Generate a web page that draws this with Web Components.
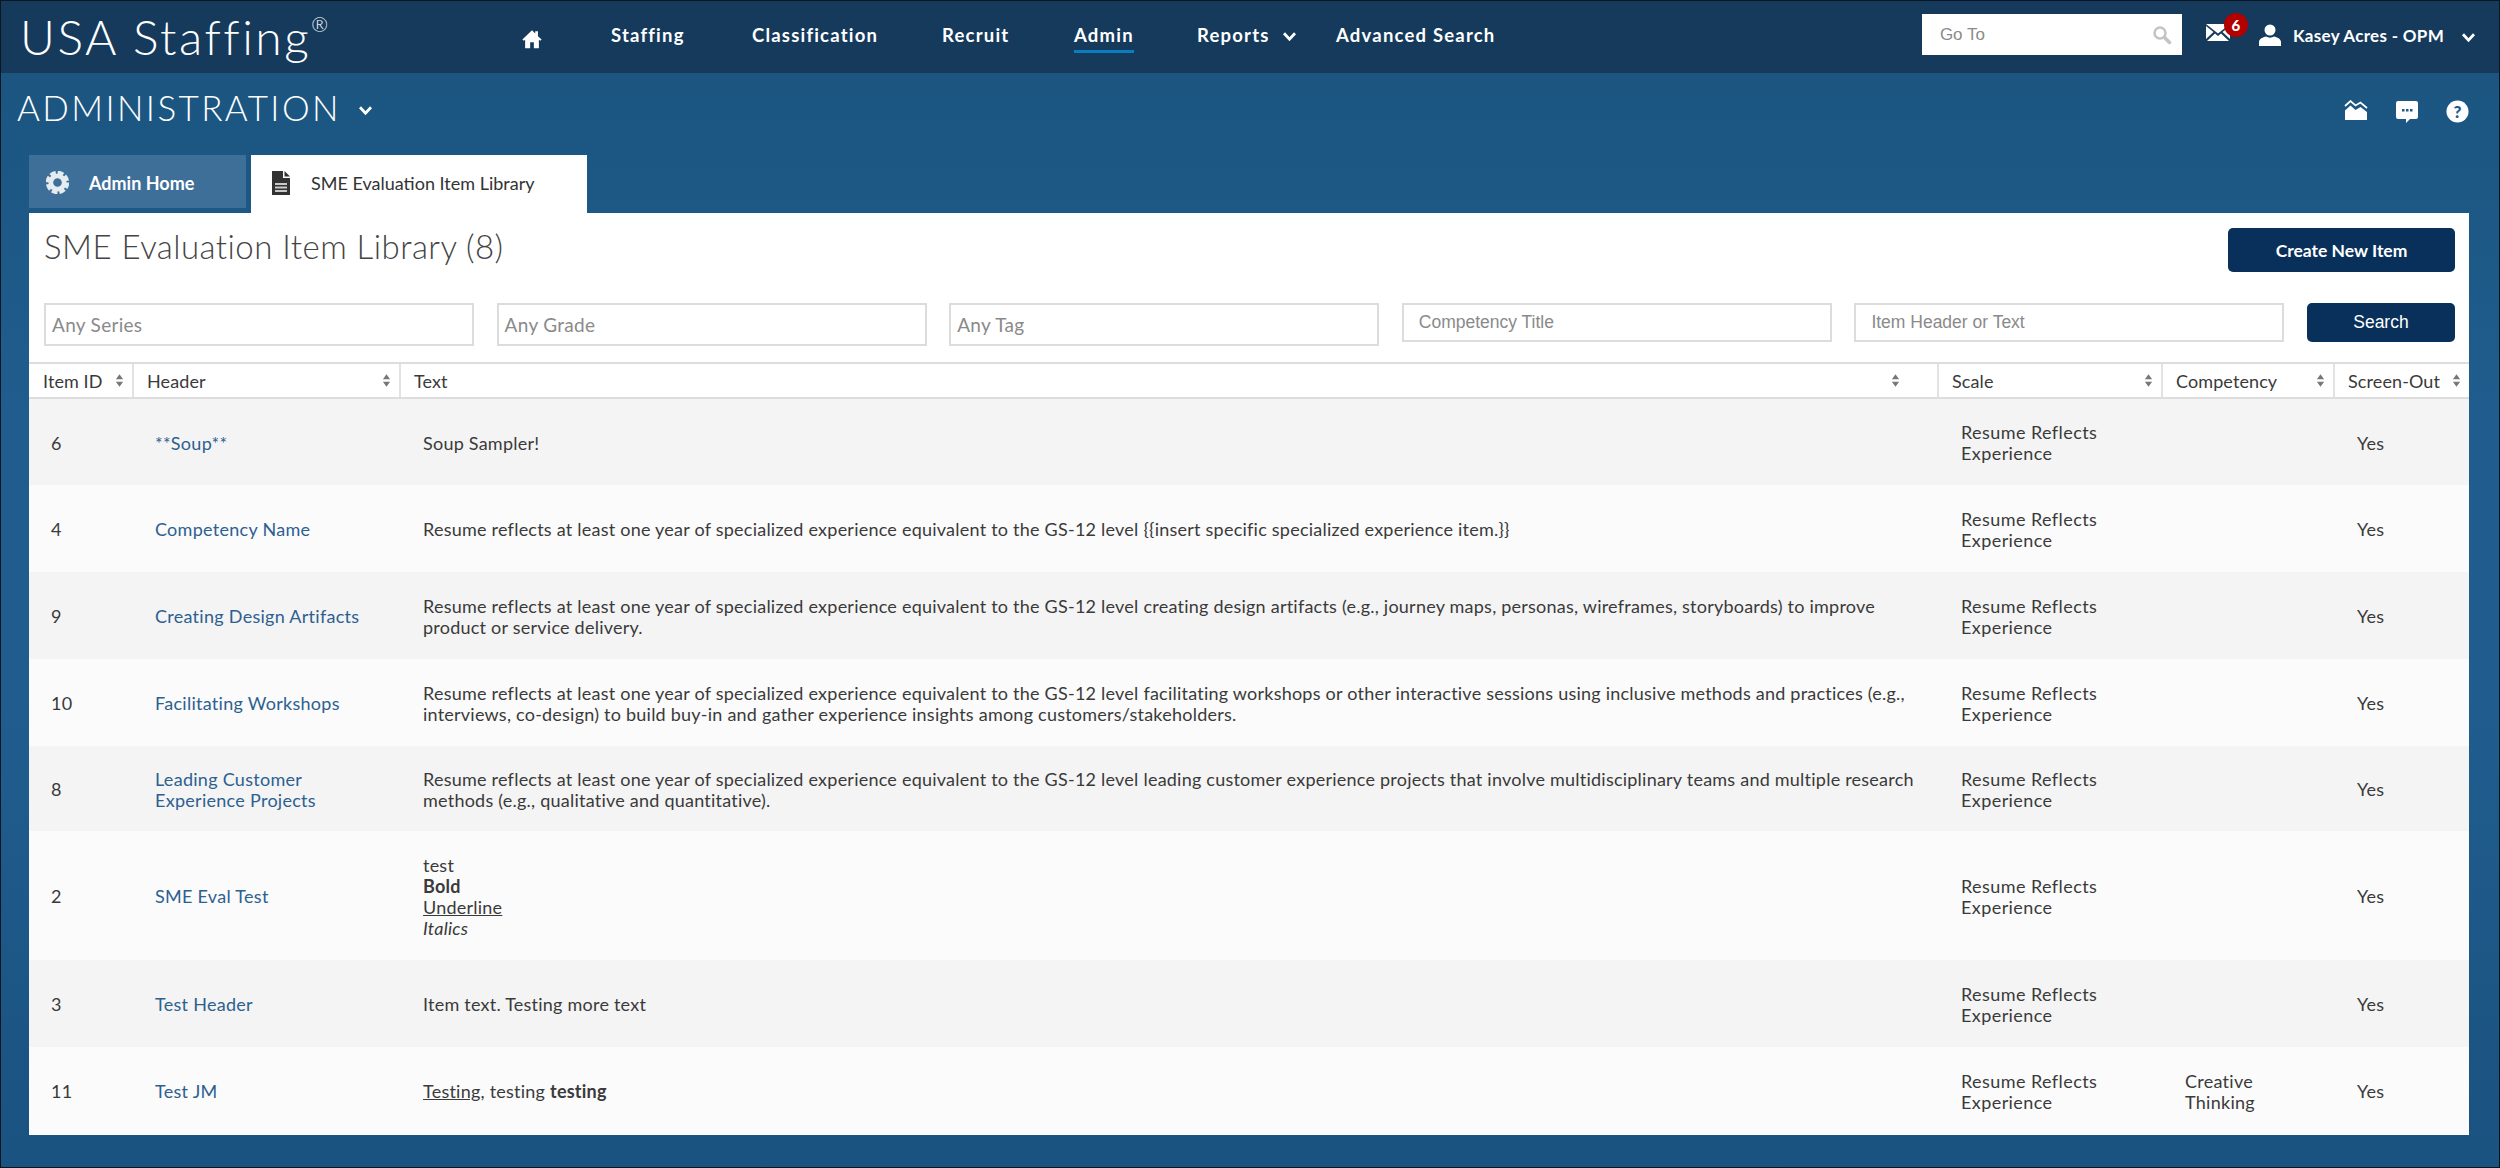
<!DOCTYPE html>
<html>
<head>
<meta charset="utf-8">
<title>SME Evaluation Item Library</title>
<style>
  html, body { margin: 0; height: 100%; }
  body {
    box-sizing: border-box;
    height: 1168px;
    overflow: hidden;
    border: 1px solid #0a1622;
    font-family: Lato, "Open Sans", sans-serif;
    background: linear-gradient(#1b5580 73px, #205d8e 420px, #205d8e 700px, #1a5280 1168px);
  }
</style>
</head>
<body>
<usa-header></usa-header>
<page-band></page-band>
<tab-strip>
  <tab-item icon="gear">Admin Home</tab-item>
  <tab-item icon="doc" active>SME Evaluation Item Library</tab-item>
</tab-strip>
<library-panel></library-panel>

<script>
const icons = {
  home: `<svg viewBox="0 0 24 24" width="22" height="22"><path fill="#fff" d="M12 2.500 1.500 12.500l1.500 1.500L4.500 12.700V22h5.500v-6.500h4V22h5.500V12.700l1.500 1.300 1.500-1.500L18.500 8.900V3.500h-3v2.500z"/></svg>`,
  chevron: `<svg viewBox="0 0 16 12" width="15" height="11"><path fill="none" stroke="#fff" stroke-width="3" d="M2 2.500 8 9l6-6.500"/></svg>`,
  search: `<svg viewBox="0 0 20 20" width="20" height="20"><circle cx="8" cy="8" r="5.500" fill="none" stroke="#c4c4c4" stroke-width="2.500"/><path stroke="#c4c4c4" stroke-width="3.500" stroke-linecap="round" d="m12.500 12.500 5 5"/></svg>`,
  mail: `<svg viewBox="0 0 24 17" width="24" height="17"><path fill="#fff" d="M0 0h24L12 9.500z"/><path fill="#fff" d="M0 2v13l7.500-7zM24 2v13l-7.500-7zM1 17l8-7.500 3 2.500 3-2.500 8 7.500z"/></svg>`,
  user: `<svg viewBox="0 0 22 22" width="22" height="22"><circle cx="11" cy="6" r="5.500" fill="#fff"/><path fill="#fff" d="M0 22v-4c0-3 4-5 7-5.500 2.500 1.500 5.500 1.500 8 0 3 .5 7 2.500 7 5.500v4z"/></svg>`,
  chart: `<svg viewBox="0 0 24 20" width="24" height="20"><path fill="#fff" d="M1 10.500l5.500-5 5 4.500 5-3L23 12v8H1z"/><path fill="none" stroke="#fff" stroke-width="1.700" d="M1 6l5.500-5 5 4.500 5-3L23 8"/></svg>`,
  chat: `<svg viewBox="0 0 24 24" width="24" height="24"><path fill="#fff" d="M3 1h18a2 2 0 0 1 2 2v14a2 2 0 0 1-2 2h-6l-4 4v-4H3a2 2 0 0 1-2-2V3a2 2 0 0 1 2-2z"/><g fill="#1d5a89"><rect x="7" y="9" width="2.500" height="2.500"/><rect x="11" y="9" width="2.500" height="2.500"/><rect x="15" y="9" width="2.500" height="2.500"/></g></svg>`,
  help: `<svg viewBox="0 0 24 24" width="23" height="23"><circle cx="12" cy="12" r="11.500" fill="#fff"/><text x="12" y="18.500" text-anchor="middle" font-family="Lato, sans-serif" font-weight="900" font-size="18" fill="#1d5a89">?</text></svg>`,
  gear: `<svg viewBox="0 0 24 24" width="23" height="23"><circle cx="12" cy="12" r="7" fill="none" stroke="#e4ebf1" stroke-width="5"/><circle cx="12" cy="12" r="10" fill="none" stroke="#e4ebf1" stroke-width="4.500" stroke-dasharray="5.800 2.050"/></svg>`,
  doc: `<svg viewBox="0 0 18 24" width="18" height="24"><path fill="#333" d="M0 0h11v7h7v17H0z"/><path fill="#333" d="M12.500 0 18 5.500h-5.500z"/><path fill="#c9c9c9" d="M3 12h12v2H3zM3 15.500h12v2H3zM3 19h12v2H3z"/></svg>`,
  sort: `<svg viewBox="0 0 10 16" width="9" height="15"><path fill="#777" d="M5 1l4 5.500H1zM5 15l-4-5.500h8z"/></svg>`
};

class UsaHeader extends HTMLElement {
  constructor() {
    super();
    this.attachShadow({ mode: 'open' }).innerHTML = `
      <style>
        :host { display: flex; align-items: flex-start; height: 72px; background: #153a5c; color: #fff; }
        svg { display: block; }
        .logo { width: 512px; padding: 9px 0 0 19px; box-sizing: border-box; font: 300 48px/54px Lato, sans-serif; letter-spacing: 2.500px; white-space: nowrap; }
        .logo sup { font-size: 20px; line-height: 0; vertical-align: 23px; letter-spacing: 0; }
        nav { display: grid; grid-template-columns: 98px 141px 190px 132px 123px 139px auto; align-items: start; height: 72px; }
        nav a { font: 700 18.500px/24px Lato, sans-serif; letter-spacing: 1.200px; padding-top: 22px; white-space: nowrap; display: flex; align-items: flex-start; }
        nav a span { display: block; padding-bottom: 3px; }
        nav a.on span { border-bottom: 3px solid #0a7dbf; }
        .home { padding: 27px 0 0 8px; }
        nav a .chev { margin: 8px 0 0 12px; }
        .right { margin-left: auto; display: flex; align-items: flex-start; padding-right: 23px; }
        .goto { width: 260px; height: 41px; margin-top: 13px; background: #fff; box-sizing: border-box; display: flex; align-items: center; justify-content: space-between; padding: 0 10px 0 18px; color: #8a8a8a; font: 17px "Liberation Sans", sans-serif; }
        .mail { position: relative; margin: 23px 0 0 24px; width: 53px; }
        .badge { position: absolute; left: 18px; top: -11px; width: 24px; height: 24px; border-radius: 50%; background: #b30000; font: 900 15px/24px Lato, sans-serif; text-align: center; }
        .user { margin-top: 23px; }
        .name { margin: 23px 17px 0 12px; font: 700 17px/24px Lato, sans-serif; white-space: nowrap; letter-spacing: .3px; }
        .uchev { margin-top: 31px; }
      </style>
      <div class="logo">USA Staffing<sup>®</sup></div>
      <nav>
        <div class="home">${icons.home}</div>
        <a>Staffing</a>
        <a>Classification</a>
        <a>Recruit</a>
        <a class="on"><span>Admin</span></a>
        <a>Reports<span class="chev">${icons.chevron}</span></a>
        <a>Advanced Search</a>
      </nav>
      <div class="right">
        <div class="goto"><span>Go To</span>${icons.search}</div>
        <div class="mail">${icons.mail}<div class="badge">6</div></div>
        <div class="user">${icons.user}</div>
        <div class="name">Kasey Acres - OPM</div>
        <div class="uchev">${icons.chevron}</div>
      </div>`;
  }
}

class PageBand extends HTMLElement {
  constructor() {
    super();
    this.attachShadow({ mode: 'open' }).innerHTML = `
      <style>
        :host { display: flex; height: 82px; color: #fff; align-items: flex-start; }
        svg { display: block; }
        h1 { margin: 0 0 0 16px; padding-top: 12px; font: 300 35px/44px Lato, sans-serif; letter-spacing: 2.400px; display: flex; align-items: center; white-space: nowrap; }
        h1 svg { margin: 6px 0 0 17px; }
        .tools { margin-left: auto; padding: 27px 30px 0 0; display: flex; gap: 27px; align-items: flex-start; }
      </style>
      <h1>ADMINISTRATION${icons.chevron}</h1>
      <div class="tools">${icons.chart}${icons.chat}${icons.help}</div>`;
  }
}

class TabStrip extends HTMLElement {
  constructor() {
    super();
    this.attachShadow({ mode: 'open' }).innerHTML = `
      <style>
        :host { display: flex; gap: 5px; height: 58px; padding-left: 28px; align-items: flex-start; }
      </style>
      <slot></slot>`;
  }
}

class TabItem extends HTMLElement {
  constructor() {
    super();
    const active = this.hasAttribute('active');
    this.attachShadow({ mode: 'open' }).innerHTML = `
      <style>
        :host { display: flex; align-items: center; box-sizing: border-box; white-space: nowrap; font-size: 18px; font-weight: ${active ? 400 : 700};
          width: ${active ? 336 : 217}px; height: ${active ? 58 : 53}px; gap: ${active ? 21 : 20}px; padding: ${active ? '0 0 2px 21px' : '2px 0 0 17px'};
          background: ${active ? '#fff' : '#3e6f99'}; color: ${active ? '#333' : '#fff'}; }
        svg { display: block; }
      </style>
      ${icons[this.getAttribute('icon')]}<slot></slot>`;
  }
}

class FilterField extends HTMLElement {
  constructor() {
    super();
    const tall = this.hasAttribute('tall');
    this.attachShadow({ mode: 'open' }).innerHTML = `
      <style>
        :host { display: flex; align-items: center; box-sizing: border-box; height: ${tall ? 43 : 39}px; border: 2px solid #dcdcdc; background: #fff;
          color: #8a8a8a; padding-left: ${tall ? 6 : 15}px; white-space: nowrap;
          font: ${tall ? '19px Lato' : '17.500px "Liberation Sans"'}, sans-serif; letter-spacing: ${tall ? '.3px' : '0'}; }
      </style>
      <slot></slot>`;
  }
}

const rows = [
  ['6', '**Soup**', 'Soup Sampler!'],
  ['4', 'Competency Name', 'Resume reflects at least one year of specialized experience equivalent to the GS-12 level {{insert specific specialized experience item.}}'],
  ['9', 'Creating Design Artifacts', 'Resume reflects at least one year of specialized experience equivalent to the GS-12 level creating design artifacts (e.g., journey maps, personas, wireframes, storyboards) to improve<br>product or service delivery.'],
  ['10', 'Facilitating Workshops', 'Resume reflects at least one year of specialized experience equivalent to the GS-12 level facilitating workshops or other interactive sessions using inclusive methods and practices (e.g.,<br>interviews, co-design) to build buy-in and gather experience insights among customers/stakeholders.'],
  ['8', 'Leading Customer<br>Experience Projects', 'Resume reflects at least one year of specialized experience equivalent to the GS-12 level leading customer experience projects that involve multidisciplinary teams and multiple research<br>methods (e.g., qualitative and quantitative).'],
  ['2', 'SME Eval Test', 'test<br><b>Bold</b><br><u>Underline</u><br><i>Italics</i>'],
  ['3', 'Test Header', 'Item text. Testing more text'],
  ['11', 'Test JM', '<u>Testing</u>, testing <b>testing</b>', 'Creative<br>Thinking']
];
const heights = [87, 87, 87, 87, 85, 129, 87, 87];

class ItemTable extends HTMLElement {
  constructor() {
    super();
    const head = ['Item ID', 'Header', 'Text', 'Scale', 'Competency', 'Screen-Out']
      .map(h => `<th><div>${h}${icons.sort}</div></th>`).join('');
    const body = rows.map((r, i) => `
      <tr style="height:${heights[i]}px">
        <td class="id">${r[0]}</td>
        <td class="hd"><a>${r[1]}</a></td>
        <td class="tx">${r[2]}</td>
        <td class="sc">Resume Reflects<br>Experience</td>
        <td class="cp">${r[3] || ''}</td>
        <td class="yn">Yes</td>
      </tr>`).join('');
    this.attachShadow({ mode: 'open' }).innerHTML = `
      <style>
        :host { display: block; font-size: 18px; color: #3a3a3a; }
        svg { display: block; }
        table { border-collapse: collapse; table-layout: fixed; width: 2440px; }
        th { height: 33px; padding: 0; border-top: 2px solid #ddd; border-bottom: 2px solid #ddd; border-left: 2px solid #e2e2e2; font-weight: 400; text-align: left; }
        th:first-child { border-left: 0; }
        th div { display: flex; align-items: center; justify-content: space-between; padding: 0 8px 0 13px; white-space: nowrap; letter-spacing: .1px; }
        th:first-child div { padding-left: 14px; }
        th:nth-child(3) div { padding-right: 37px; }
        td { padding: 2px 0 0; line-height: 21px; white-space: nowrap; letter-spacing: .28px; }
        tr:nth-child(odd) td { background: #f4f4f4; }
        tr:nth-child(even) td { background: #fbfbfb; }
        .id, .hd { padding-left: 22px; }
        .hd a { color: #2d6090; }
        .tx, .sc, .cp, .yn { padding-left: 23px; }
        .tx { letter-spacing: .23px; }
        .sc { letter-spacing: .42px; }
      </style>
      <table>
        <colgroup><col style="width:104px"><col style="width:267px"><col style="width:1538px"><col style="width:224px"><col style="width:172px"><col style="width:135px"></colgroup>
        <thead><tr>${head}</tr></thead>
        <tbody>${body}</tbody>
      </table>`;
  }
}

class LibraryPanel extends HTMLElement {
  constructor() {
    super();
    this.attachShadow({ mode: 'open' }).innerHTML = `
      <style>
        :host { display: block; margin: 0 30px 0 28px; background: #fff; height: 922px; }
        .title { display: flex; justify-content: space-between; align-items: flex-start; padding: 15px 14px 0 15px; height: 90px; box-sizing: border-box; }
        h2 { margin: -4px 0 0; font: 300 33px/44px Lato, sans-serif; color: #444; letter-spacing: .45px; white-space: nowrap; }
        .btn { display: flex; align-items: center; justify-content: center; background: #08305a; color: #fff; border-radius: 5px; box-sizing: border-box; }
        .create { width: 227px; height: 44px; font: 700 17.500px Lato, sans-serif; }
        .filters { display: grid; grid-template-columns: repeat(5, 430px) 148px; column-gap: 22.600px; align-items: start; padding-left: 15px; height: 59px; }
        .search { height: 39px; font: 17.500px "Liberation Sans", sans-serif; }
      </style>
      <div class="title">
        <h2>SME Evaluation Item Library (8)</h2>
        <div class="btn create">Create New Item</div>
      </div>
      <div class="filters">
        <filter-field tall>Any Series</filter-field>
        <filter-field tall>Any Grade</filter-field>
        <filter-field tall>Any Tag</filter-field>
        <filter-field>Competency Title</filter-field>
        <filter-field>Item Header or Text</filter-field>
        <div class="btn search">Search</div>
      </div>
      <item-table></item-table>`;
  }
}

customElements.define('usa-header', UsaHeader);
customElements.define('page-band', PageBand);
customElements.define('tab-strip', TabStrip);
customElements.define('tab-item', TabItem);
customElements.define('filter-field', FilterField);
customElements.define('item-table', ItemTable);
customElements.define('library-panel', LibraryPanel);
</script>
</body>
</html>
